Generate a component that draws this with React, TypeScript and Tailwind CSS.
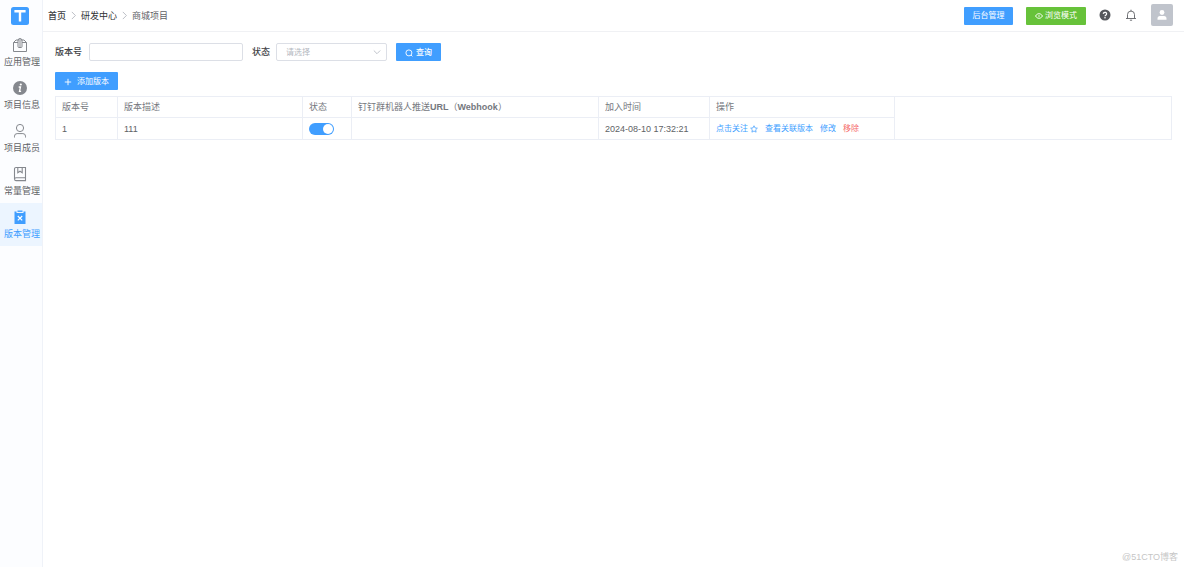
import { useState } from 'react'
import type { ReactNode } from 'react'

const menu = [
  { key: 'app', label: '应用管理' },
  { key: 'info', label: '项目信息' },
  { key: 'member', label: '项目成员' },
  { key: 'constant', label: '常量管理' },
  { key: 'version', label: '版本管理' },
]

const versions = [{ id: 1, no: '1', desc: '111', webhook: '', createdAt: '2024-08-10 17:32:21' }]

const cell = 'border border-[#ebeef5] px-1.5 text-left'

function Logo() {
  return (
    <svg viewBox="0 0 18 18" className="size-[18px]" aria-hidden="true">
      <rect width="18" height="18" rx="2.5" fill="#409eff" />
      <path d="M3.4 4.2h11.2M9 4.2v10.4" fill="none" stroke="#fff" strokeWidth="2.4" />
    </svg>
  )
}

const menuIcons: Record<string, ReactNode> = {
  app: (
    <g fill="none" stroke="currentColor" strokeWidth="1">
      <path d="M1.500 5.500v9h13v-9L12 3H4L1.500 5.500zM1.500 5.500H6M10 5.500h4.500" />
      <path d="M6 9.500V3.500Q6 1.500 8 1.500t2 2v6q0 1-1 1H7q-1 0-1-1zM8 4v6" />
    </g>
  ),
  info: (
    <g>
      <circle cx="8" cy="8" r="7" fill="currentColor" />
      <circle cx="8.8" cy="4.5" r="1.1" fill="#fff" />
      <path d="M6.7 7h1.8l-1 4.4h1.6" fill="none" stroke="#fff" strokeWidth="1.3" />
    </g>
  ),
  member: (
    <g fill="none" stroke="currentColor" strokeWidth="1">
      <circle cx="8" cy="5" r="3.6" />
      <path d="M2.500 14.500v-1.300a2.600 2.600 0 0 1 2.600-2.600h5.800a2.600 2.600 0 0 1 2.600 2.600v1.300" />
    </g>
  ),
  constant: (
    <g fill="none" stroke="currentColor" strokeWidth="1.1">
      <path d="M13.5 11.8V1.500H4a1.500 1.500 0 0 0-1.500 1.500v10.100M13.500 11.800H4a1.400 1.400 0 0 0 0 2.800h9.500v-2.800z" />
      <path d="M5.8 1.5v5.2L8 5.2l2.2 1.5V1.5" />
    </g>
  ),
  version: (
    <g>
      <path d="M2.500 2.500h2v1.400h7V2.500h2V15h-11z" fill="currentColor" />
      <path d="M5.500 1.500h5v1.400h-5z" fill="currentColor" />
      <path d="M5.800 7l4.400 4.400M10.200 7l-4.400 4.400" stroke="#fff" strokeWidth="1.2" />
    </g>
  ),
}

function Separator() {
  return (
    <svg viewBox="0 0 8 8" className="size-[9px] text-[#b4b8c0]" aria-hidden="true">
      <path d="M2.5 .8L5.7 4 2.5 7.2" fill="none" stroke="currentColor" strokeWidth=".8" />
    </svg>
  )
}

function Sidebar() {
  return (
    <aside className="flex w-[43px] shrink-0 flex-col border-r border-[#eff2f8] bg-[#fcfdff]">
      <div className="flex h-[31px] items-center pl-[11px]">
        <Logo />
      </div>
      <nav>
        {menu.map((item) => (
          <a
            key={item.key}
            href={`#${item.key}`}
            className={`flex h-[43px] flex-col items-start gap-[3px] pt-1.5 text-[9px] leading-3 ${
              item.key === 'version' ? 'bg-[#ecf5ff] text-[#409eff]' : 'text-[#606266]'
            }`}
          >
            <svg
              viewBox="0 0 16 16"
              className={`ml-3 size-4 ${item.key === 'version' ? 'text-[#409eff]' : 'text-[#85888e]'}`}
              aria-hidden="true"
            >
              {menuIcons[item.key]}
            </svg>
            <span className="pl-1 whitespace-nowrap">{item.label}</span>
          </a>
        ))}
      </nav>
    </aside>
  )
}

function Header() {
  return (
    <header className="flex h-8 items-center justify-between border-b border-[#f0f1f4] pr-[11px] pl-[5px]">
      <nav aria-label="breadcrumb" className="flex items-center gap-[3px] text-[9px] leading-3 text-[#606266]">
        <a href="#home" className="font-medium text-[#404145]">首页</a>
        <Separator />
        <a href="#dev" className="text-[#303133]">研发中心</a>
        <Separator />
        <span>商城项目</span>
      </nav>
      <div className="flex items-center">
        <button type="button" className="h-[18px] w-[49px] rounded-[1px] bg-[#409eff] pt-px text-[8px] leading-none text-white">
          后台管理
        </button>
        <button
          type="button"
          className="ml-[13px] flex h-[18px] w-[60px] items-center justify-center gap-0.5 rounded-[1px] bg-[#67c23a] pt-px text-[8px] leading-none text-white"
        >
          <svg viewBox="0 0 16 16" className="size-2" fill="none" stroke="currentColor" strokeWidth="1.800" aria-hidden="true">
            <path d="M1 8c1.800-3 4.100-4.600 7-4.600S13.200 5 15 8c-1.800 3-4.100 4.600-7 4.600S2.800 11 1 8z" />
            <circle cx="8" cy="8" r="1.500" fill="currentColor" stroke="none" />
          </svg>
          浏览模式
        </button>
        <button type="button" aria-label="帮助" className="mb-0.5 ml-[13px]">
          <svg viewBox="0 0 12 12" className="size-3" aria-hidden="true">
            <circle cx="6" cy="6" r="5.500" fill="#55575c" />
            <path d="M4.400 4.900a1.600 1.500 0 1 1 2.600 1.100c-.7.500-1 .7-1 1.300" fill="none" stroke="#fff" strokeWidth="1.300" />
            <circle cx="6" cy="8.800" r=".8" fill="#fff" />
          </svg>
        </button>
        <button type="button" aria-label="通知" className="mb-px ml-3.5">
          <svg viewBox="0 0 12 12" className="size-3" fill="none" stroke="#606266" strokeWidth=".9" aria-hidden="true">
            <path d="M1 9.500h10M2.500 9.500V5.600a3.500 3.500 0 0 1 7 0v3.900M6 2V.7M4.900 11.200h2.200" />
          </svg>
        </button>
        <button type="button" aria-label="用户" className="mb-0.5 ml-3.5 flex size-[22px] items-center justify-center rounded-xs bg-[#c0c4cc]">
          <svg viewBox="0 0 12 12" className="size-3" fill="#fff" aria-hidden="true">
            <circle cx="6" cy="3.500" r="2.400" />
            <path d="M1.500 10.700V9.600a2.500 2.500 0 0 1 2.500-2.500h4a2.500 2.500 0 0 1 2.500 2.500v1.100z" />
          </svg>
        </button>
      </div>
    </header>
  )
}

function SearchForm() {
  return (
    <form className="flex items-center text-[9px] leading-3 text-[#404145]" onSubmit={(e) => e.preventDefault()}>
      <label htmlFor="versionNo" className="w-[34px] font-medium">版本号</label>
      <input id="versionNo" type="text" className="h-[18px] w-[154px] rounded-xs border border-[#dcdfe6] px-2 outline-none" />
      <label htmlFor="status" className="ml-[9px] w-6 font-medium">状态</label>
      <div className="relative">
        <select
          id="status"
          defaultValue=""
          className="block h-[18px] w-[111px] appearance-none rounded-xs border border-[#dcdfe6] bg-white pt-px pl-[9px] text-[8px] leading-3 text-[#b4b8c0] outline-none"
        >
          <option value="">请选择</option>
          <option value="1">启用</option>
          <option value="0">停用</option>
        </select>
        <svg viewBox="0 0 8 8" className="pointer-events-none absolute top-[5px] right-1.5 size-2 text-[#c0c4cc]" aria-hidden="true">
          <path d="M.8 2.500L4 5.700l3.200-3.200" fill="none" stroke="currentColor" />
        </svg>
      </div>
      <button
        type="submit"
        className="ml-[9px] flex h-[18px] w-[45px] items-center justify-center gap-[3px] rounded-[1px] bg-[#409eff] pt-px text-[8px] leading-none font-medium text-white"
      >
        <svg viewBox="0 0 8 8" className="size-2" fill="none" stroke="currentColor" strokeWidth=".9" aria-hidden="true">
          <circle cx="3.900" cy="3.900" r="3" />
          <path d="M6 6l1.400 1.400" />
        </svg>
        查询
      </button>
    </form>
  )
}

function VersionTable() {
  const [enabled, setEnabled] = useState(true)

  return (
    <table className="mt-1.5 w-full table-fixed border-collapse text-[9px] leading-3 text-[#606266]">
      <colgroup>
        <col className="w-[62px]" />
        <col className="w-[185px]" />
        <col className="w-[49px]" />
        <col className="w-[247px]" />
        <col className="w-[111px]" />
        <col className="w-[185px]" />
        <col />
      </colgroup>
      <tbody>
        <tr className="h-[21px] text-[#75787e]">
          <th className={`${cell} font-normal`}>版本号</th>
          <th className={`${cell} font-normal`}>版本描述</th>
          <th className={`${cell} font-normal`}>状态</th>
          <th className={`${cell} font-normal`}>
            钉钉群机器人推送<b>URL</b>（<b>Webhook</b>）
          </th>
          <th className={`${cell} font-normal`}>加入时间</th>
          <th className={`${cell} font-normal`}>操作</th>
          <td rowSpan={versions.length + 1} className={cell} />
        </tr>
        {versions.map((v) => (
          <tr key={v.id} className="h-[22px]">
            <td className={cell}>{v.no}</td>
            <td className={cell}>{v.desc}</td>
            <td className={cell}>
              <label className="flex h-3 w-[25px] items-center justify-end rounded-full bg-[#409eff] p-px has-[:not(:checked)]:justify-start has-[:not(:checked)]:bg-[#dcdfe6]">
                <input
                  type="checkbox"
                  role="switch"
                  aria-label="状态"
                  checked={enabled}
                  onChange={(e) => setEnabled(e.target.checked)}
                  className="size-2.5 appearance-none rounded-full bg-white"
                />
              </label>
            </td>
            <td className={cell}>{v.webhook}</td>
            <td className={cell}>{v.createdAt}</td>
            <td className={cell}>
              <div className="flex items-center gap-[7px] text-[8px] whitespace-nowrap text-[#409eff]">
                <a href="#follow" className="flex items-center gap-0.5">
                  点击关注
                  <svg viewBox="0 0 16 16" className="size-2" fill="none" stroke="currentColor" strokeWidth="1.500" aria-hidden="true">
                    <path d="M8 1.500l2 4.300 4.700.6-3.400 3.200.9 4.700L8 12l-4.200 2.300.9-4.700L1.300 6.400 6 5.800z" />
                  </svg>
                </a>
                <a href="#related">查看关联版本</a>
                <a href="#edit">修改</a>
                <a href="#remove" className="text-[#f56c6c]">移除</a>
              </div>
            </td>
          </tr>
        ))}
      </tbody>
    </table>
  )
}

export default function App() {
  return (
    <div className="flex min-h-screen bg-white font-['Liberation_Sans','Noto_Sans_CJK_SC',sans-serif]">
      <Sidebar />
      <div className="flex min-w-0 flex-1 flex-col">
        <Header />
        <main className="flex-1 px-3 pt-[11px]">
          <SearchForm />
          <button
            type="button"
            className="mt-[11px] flex h-[18px] w-[63px] items-center justify-center gap-[5px] rounded-[1px] bg-[#409eff] pt-px text-[8px] leading-none text-white"
          >
            <svg viewBox="0 0 8 8" className="size-2" stroke="currentColor" strokeWidth=".9" aria-hidden="true">
              <path d="M4 .8v6.400M.8 4h6.400" />
            </svg>
            添加版本
          </button>
          <VersionTable />
        </main>
        <footer className="px-1.5 pb-1 text-right text-[9px] leading-3 text-[#c6c6c6]">@51CTO博客</footer>
      </div>
    </div>
  )
}
